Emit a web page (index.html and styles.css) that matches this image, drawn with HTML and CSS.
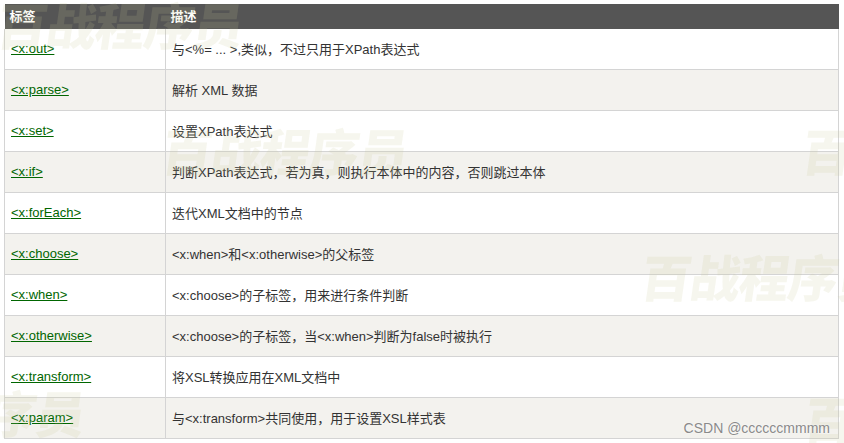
FILE: index.html
```html
<!DOCTYPE html>
<html lang="zh-CN">
<head>
<meta charset="utf-8">
<link rel="stylesheet" href="styles.css">
</head>
<body>
<div class="page">
<table class="ref">
  <colgroup><col class="c1"><col class="c2"></colgroup>
  <thead>
    <tr><th>标签</th><th>描述</th></tr>
  </thead>
  <tbody>
    <tr><td><a href="#">&lt;x:out&gt;</a></td><td>与&lt;%= ... &gt;,类似，不过只用于XPath表达式</td></tr>
    <tr><td><a href="#">&lt;x:parse&gt;</a></td><td>解析 XML 数据</td></tr>
    <tr><td><a href="#">&lt;x:set&gt;</a></td><td>设置XPath表达式</td></tr>
    <tr><td><a href="#">&lt;x:if&gt;</a></td><td>判断XPath表达式，若为真，则执行本体中的内容，否则跳过本体</td></tr>
    <tr><td><a href="#">&lt;x:forEach&gt;</a></td><td>迭代XML文档中的节点</td></tr>
    <tr><td><a href="#">&lt;x:choose&gt;</a></td><td>&lt;x:when&gt;和&lt;x:otherwise&gt;的父标签</td></tr>
    <tr><td><a href="#">&lt;x:when&gt;</a></td><td>&lt;x:choose&gt;的子标签，用来进行条件判断</td></tr>
    <tr><td><a href="#">&lt;x:otherwise&gt;</a></td><td>&lt;x:choose&gt;的子标签，当&lt;x:when&gt;判断为false时被执行</td></tr>
    <tr><td><a href="#">&lt;x:transform&gt;</a></td><td>将XSL转换应用在XML文档中</td></tr>
    <tr><td><a href="#">&lt;x:param&gt;</a></td><td>与&lt;x:transform&gt;共同使用，用于设置XSL样式表</td></tr>
  </tbody>
</table>
<span class="wm wm1">百战程序员</span>
<span class="wm wm2">百战程序员</span>
<span class="wm wm3">百战程序员</span>
<span class="wm wm4">百战程序员</span>
<span class="wm wm5">百战程序员</span>
<span class="wm wm6">百战程序员</span>
<span class="csdn">CSDN @ccccccmmmm</span>
</div>
</body>
</html>
```

FILE: styles.css
```css
html, body {
  margin: 0;
  padding: 0;
  background: #ffffff;
}
.page {
  position: relative;
  width: 844px;
  height: 443px;
  overflow: hidden;
  padding: 4px 0 0 4px;
  box-sizing: border-box;
  font-family: "Liberation Sans", Arial, "Noto Sans CJK SC", sans-serif;
  font-size: 13px;
  color: #333333;
}
.ref {
  border-collapse: collapse;
  width: 835px;
  table-layout: fixed;
}
.c1 { width: 161px; }
.ref th {
  background: #555555;
  color: #ffffff;
  font-weight: bold;
  text-align: left;
  height: 25px;
  padding: 0 5px;
  box-sizing: border-box;
  line-height: 25px;
}
.ref td {
  border: 1px solid #d4d4d4;
  height: 41px;
  padding: 0 6px;
  box-sizing: border-box;
  vertical-align: middle;
}
.ref thead + tbody tr:first-child td { border-top: none; height: 40px; }
.ref tbody tr:nth-child(even) td { background: #f3f2ee; }
.ref a {
  color: #006600;
  text-decoration: underline;
}
.wm {
  position: absolute;
  font-family: "Noto Sans CJK SC", sans-serif;
  font-weight: 900;
  font-size: 50px;
  line-height: 1;
  letter-spacing: -1px;
  color: rgba(200, 200, 150, 0.16);
  white-space: nowrap;
  pointer-events: none;
  transform: skewX(-8deg);
}
.wm1 { left: -2px; top: -2px; }
.wm2 { left: 163px; top: 124px; }
.wm3 { left: 803px; top: 124px; }
.wm4 { left: 642px; top: 250px; }
.wm5 { left: -160px; top: 386px; }
.wm6 { left: 805px; top: 392px; }
.csdn {
  position: absolute;
  right: 14px;
  top: 420px;
  font-family: "Liberation Sans", Arial, sans-serif;
  font-size: 14px;
  color: #8a8a8a;
  text-shadow: 0 0 2px #ffffff;
  white-space: nowrap;
}
```
